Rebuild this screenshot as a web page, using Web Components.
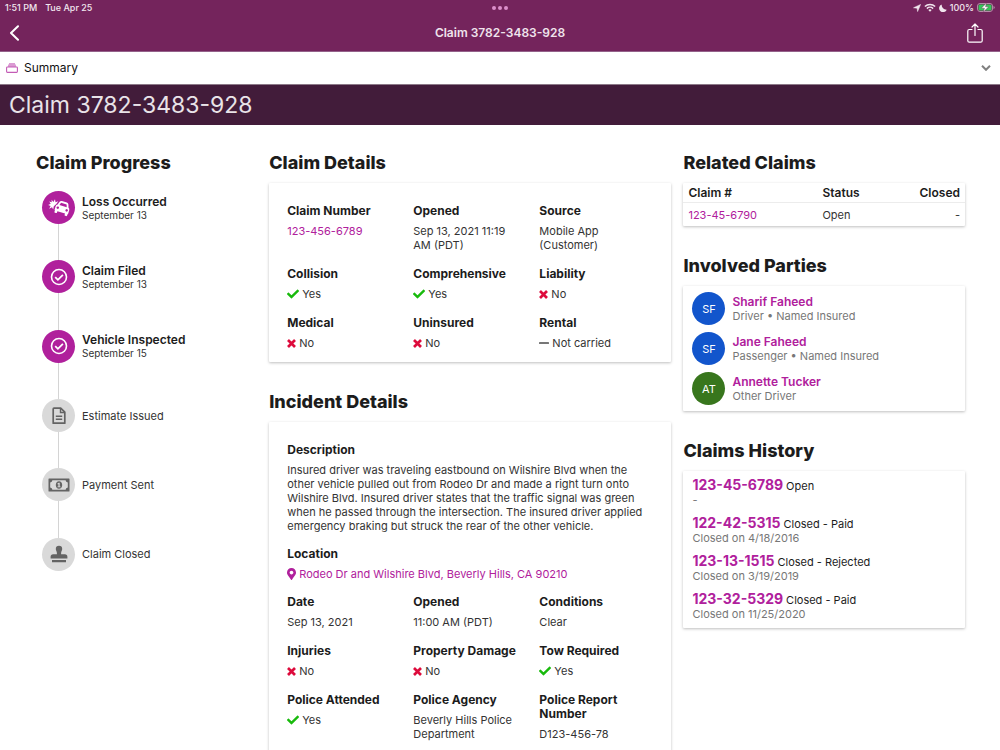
<!DOCTYPE html>
<html lang="en">
<head>
<meta charset="utf-8">
<meta name="viewport" content="width=device-width, initial-scale=1">
<title>Claim 3782-3483-928</title>
<style>
  body { margin: 0; background: #fff; color: #333; font: 11px/14px Inter, "Liberation Sans", sans-serif;
    --accent: #b0209c; --brand: #74245c; --band: #421c3a; --ink: #1c1c1c; }
</style>
</head>
<body>
<claim-app></claim-app>
<script>
const ICONS = {
  check: ['0 0 512 512', '<path fill="currentColor" d="M173.898 439.404l-166.4-166.4c-9.997-9.997-9.997-26.206 0-36.204l36.203-36.204c9.997-9.998 26.207-9.998 36.204 0L192 312.69 432.095 72.596c9.997-9.997 26.207-9.997 36.204 0l36.203 36.204c9.997 9.997 9.997 26.206 0 36.204l-294.4 294.401c-9.998 9.997-26.207 9.997-36.204-.001z"/>'],
  cross: ['0 0 9 9', '<path fill="none" stroke="currentColor" stroke-width="2.700" d="M1 1l7 7M8 1l-7 7"/>'],
  minus: ['0 0 10 10', '<rect y="4" width="10" height="2" rx=".5" fill="currentColor"/>'],
  pin: ['0 0 384 512', '<path fill="currentColor" d="M172.268 501.67C26.97 291.031 0 269.413 0 192 0 85.961 85.961 0 192 0s192 85.961 192 192c0 77.413-26.97 99.031-172.268 309.67-9.535 13.774-29.93 13.773-39.464 0zM192 272c44.183 0 80-35.817 80-80s-35.817-80-80-80-80 35.817-80 80 35.817 80 80 80z"/>'],
  back: ['0 0 10 16', '<path fill="none" stroke="currentColor" stroke-width="2" stroke-linecap="round" stroke-linejoin="round" d="M8.500 1.200L1.500 8l7 6.800"/>'],
  share: ['0 0 16 20', '<path fill="none" stroke="currentColor" stroke-width="1.200" stroke-linecap="round" stroke-linejoin="round" d="M5 6.500H2.300Q.8 6.500 .8 8V17.700Q.8 19.200 2.300 19.200H13.700Q15.200 19.200 15.200 17.700V8Q15.200 6.500 13.700 6.500H11M8 12.500V1M5 4l3-3 3 3"/>'],
  chevron: ['0 0 10 6', '<path fill="none" stroke="currentColor" stroke-width="2" d="M1 .8l4 4 4-4"/>'],
  stack: ['0 0 12 10', '<path fill="#db9bd3" d="M3 0h6v1.500H3zM2 1.500h8v2.500H2z"/><rect x=".6" y="4" width="10.800" height="5.400" rx=".8" fill="#fff" stroke="#c35bb5" stroke-width="1.100"/>'],
  okcircle: ['0 0 18 18', '<circle cx="9" cy="9" r="7.500" fill="none" stroke="currentColor" stroke-width="1.600"/><path fill="none" stroke="currentColor" stroke-width="1.800" d="M5.200 9.200l2.700 2.600 5-5"/>'],
  crash: ['0 0 22 18', '<path fill="currentColor" d="M3.600.8L5.400 2.900 7 .3 7.500 3.200 10.300 2.300 8.300 4.900 5.800 7.300 5.200 10.400 4 8.300 1.200 9.800 2.600 7 .2 6.100 2.700 4.700 1.200 2.400 3.700 3.200z"/><g transform="rotate(17 14 10)"><path fill="currentColor" fill-rule="evenodd" d="M9.600 3.800Q10.100 2.400 11.600 2.400H16.800Q18.300 2.400 18.800 3.800L19.900 7Q21.300 7.500 21.300 9.200V12.600Q21.300 13.200 20.800 13.300V14.800Q20.800 15.600 20 15.600H19Q18.200 15.600 18.200 14.800V13.400H10.200V14.800Q10.200 15.600 9.400 15.600H8.400Q7.600 15.600 7.600 14.800V13.300Q7.100 13.200 7.100 12.600V9.200Q7.100 7.500 8.500 7zM11.300 4.300L10.400 7H18L17.100 4.300zM9.500 8.700a1.250 1.250 0 1 0 .1 0zM18.800 8.700a1.250 1.250 0 1 0 .1 0z"/></g>'],
  doc: ['0 0 14 18', '<path fill="none" stroke="currentColor" stroke-width="1.700" stroke-linejoin="round" d="M2 1.200H8.700L12.800 5.200V16.200H1.200V2Q1.200 1.200 2 1.200z"/><path fill="none" stroke="currentColor" stroke-width="1.400" d="M8.500 1.500V5.500H12.500M3.800 9.300H10.200M3.800 12.200H10.200"/>'],
  cash: ['0 0 22 14', '<path fill="currentColor" fill-rule="evenodd" d="M1 .5H21Q21.500.5 21.500 1V13Q21.500 13.500 21 13.500H1Q.5 13.500.5 13V1Q.5.5 1 .5zM4.400 2.200Q4.200 4.200 2.200 4.400V9.600Q4.200 9.800 4.400 11.800H17.600Q17.800 9.800 19.800 9.600V4.400Q17.800 4.200 17.600 2.200z"/><path fill="currentColor" fill-rule="evenodd" d="M11 3.200c1.900 0 3.200 1.700 3.200 3.800S12.900 10.800 11 10.800 7.800 9.100 7.800 7 9.100 3.200 11 3.200zM10.700 4.800l-1.200.6v.8h.9v2.200H9.500v.9h3V8.400h-.8V4.800z"/>'],
  stamp: ['0 0 18 18', '<path fill="currentColor" d="M9 .8a3.200 3.200 0 0 1 3.200 3.200c0 1.700-1.100 2.300-1.100 4.200V9.200H14.800a2.600 2.600 0 0 1 2.600 2.600V13.600H.6V11.800A2.600 2.600 0 0 1 3.200 9.200H6.900V8.200C6.900 6.300 5.800 5.700 5.800 4A3.200 3.200 0 0 1 9 .8zM2 15H16V17.200H2z"/>'],
  locate: ['0 0 8 8', '<path fill="currentColor" stroke="currentColor" stroke-width=".5" stroke-linejoin="round" d="M7.600.4L4.600 7.600 4.100 4.200.5 3.800z"/>'],
  wifi: ['0 0 12 9', '<g fill="none" stroke="currentColor" stroke-width="1.500"><path d="M.9 3.500a7.200 7.200 0 0 1 10.200 0M2.900 5.600a4.400 4.400 0 0 1 6.200 0"/></g><path fill="currentColor" d="M6 8.700L4.300 7a2.400 2.400 0 0 1 3.400 0z"/>'],
  moon: ['0 0 8 8', '<path fill="currentColor" d="M2.700.4A4.800 4.800 0 0 0 7.800 5.700 4 4 0 1 1 2.700.4z"/>'],
  battery: ['0 0 18 9', '<rect x=".5" y=".5" width="15" height="8" rx="2.500" fill="none" stroke="#b58aa8"/><rect x="1.500" y="1.500" width="13" height="6" rx="1.500" fill="#34c759"/><path fill="#b58aa8" d="M16.500 3q1.200.3 1.200 1.500T16.500 6z"/><path fill="#fff" stroke="#74245c" stroke-width=".4" d="M9.500 0L4.300 5.200H7.500L6.300 9 11.700 3.800H8.500z"/>']
};

class UiIcon extends HTMLElement {
  connectedCallback() {
    const [box, art] = ICONS[this.getAttribute('name')];
    const root = this.shadowRoot || this.attachShadow({ mode: 'open' });
    root.innerHTML = `<style>:host{display:inline-block;flex:none}svg{display:block;width:100%;height:100%}</style><svg viewBox="${box}" aria-hidden="true">${art}</svg>`;
  }
}
customElements.define('ui-icon', UiIcon);

function define(name, render) {
  customElements.define(name, class extends HTMLElement {
    connectedCallback() {
      const root = this.shadowRoot || this.attachShadow({ mode: 'open' });
      root.innerHTML = render(this);
    }
  });
}

define('status-bar', () => `
<style>
  :host { display: grid; grid-template-columns: 1fr auto 1fr; align-items: center; height: 15px; padding: 0 5px; color: #f1e6ee; font-size: 9px; line-height: 12px; font-weight: 500; }
  .time { display: flex; gap: 8px; }
  .dots { display: flex; gap: 2px; }
  .dots i { width: 4px; height: 4px; border-radius: 50%; background: #dc8fcb; }
  .right { display: flex; gap: 3px; align-items: center; justify-content: flex-end; }
  .s { width: 8px; height: 8px; } .w { width: 12px; height: 9px; } .b { width: 18px; height: 9px; }
</style>
<div class="time"><span>1:51 PM</span><span>Tue Apr 25</span></div>
<div class="dots"><i></i><i></i><i></i></div>
<div class="right"><ui-icon class="s" name="locate"></ui-icon><ui-icon class="w" name="wifi"></ui-icon><ui-icon class="s" name="moon"></ui-icon><span>100%</span><ui-icon class="b" name="battery"></ui-icon></div>`);

define('nav-bar', () => `
<style>
  :host { display: grid; grid-template-columns: 1fr auto 1fr; align-items: center; height: 36px; padding: 0 8px; color: #efe3ec; border-bottom: 1px solid #94628a; }
  button { display: block; background: none; border: 0; padding: 0; color: #fff; }
  button:last-child { justify-self: end; padding-right: 9px; }
  h1 { margin: 0; font-size: 12px; line-height: 18px; font-weight: 600; }
  .back { width: 13px; height: 16px; display: block; } .share { width: 16px; height: 20px; display: block; }
</style>
<button aria-label="Back"><ui-icon class="back" name="back"></ui-icon></button>
<h1><slot></slot></h1>
<button aria-label="Share"><ui-icon class="share" name="share"></ui-icon></button>`);

define('view-picker', () => `
<style>
  :host { display: block; background: #fff; border-bottom: 1px solid #8c7988; }
  button { display: flex; align-items: center; gap: 6px; width: 100%; height: 32px; padding: 0 9px 0 6px; border: 0; background: none; font: inherit; font-size: 12px; color: #111; }
  .stack { width: 12px; height: 10px; } .chev { width: 10px; height: 6px; margin-left: auto; color: #808080; }
</style>
<button aria-expanded="false"><ui-icon class="stack" name="stack"></ui-icon><slot></slot><ui-icon class="chev" name="chevron"></ui-icon></button>`);

define('page-section', el => `
<style>
  :host { display: block; }
  h2 { margin: 0 0 8px; font-size: 18px; line-height: 24px; font-weight: 800; color: var(--ink); }
</style>
<section><h2>${el.getAttribute('heading')}</h2><slot></slot></section>`);

define('ui-card', () => `
<style>
  :host { display: block; background: #fff; border-radius: 1px; box-shadow: 0 1px 3px rgba(0,0,0,.26); box-sizing: border-box; padding: var(--pad, 0); }
</style><slot></slot>`);

define('progress-list', () => `
<style>
  :host { display: block; }
  div { display: grid; grid-auto-rows: 1fr; height: 416px; padding: 8px 0 0 6px; }
</style><div role="list"><slot></slot></div>`);

define('progress-step', el => {
  const date = el.getAttribute('date');
  return `
<style>
  :host { display: grid; grid-template-columns: 33px 1fr; grid-template-rows: 33px 1fr; column-gap: 7px; }
  .dot { display: grid; place-items: center; border-radius: 50%; background: ${date ? 'var(--accent)' : '#d9d9d9'}; color: ${date ? '#fff' : '#636363'}; }
  .text { align-self: center; }
  strong { display: block; color: var(--ink); font-size: 12px; font-weight: 600; }
  small { display: block; font-size: 10px; line-height: 12px; }
  .line { justify-self: center; width: 1px; background: #d4d4d4; }
  :host(:last-child) .line { display: none; }
  ui-icon { width: ${el.getAttribute('w') || 18}px; height: ${el.getAttribute('h') || 18}px; }
</style>
<div class="dot"><ui-icon name="${el.getAttribute('icon')}"></ui-icon></div>
<div class="text">${date ? `<strong><slot></slot></strong><small>${date}</small>` : '<slot></slot>'}</div>
<div class="line"></div>`;
});

define('field-grid', () => `
<style>
  :host { display: grid; grid-template-columns: repeat(3, minmax(0, 1fr)); gap: 15px 12px; }
  ::slotted(data-field) { padding-right: 4px; }
</style><slot></slot>`);

define('data-field', el => {
  const marks = { yes: ['check', '#18ba0c', 12, 12], no: ['cross', '#dd0b3c', 9, 9], none: ['minus', '#777', 10, 10], place: ['pin', 'var(--accent)', 9, 12] };
  const m = marks[el.getAttribute('mark')];
  return `
<style>
  :host { display: block; }
  .label { font-size: 12px; font-weight: 700; color: var(--ink); margin-bottom: 6px; }
  .value { display: flex; align-items: center; gap: 3px; }
  ${m ? `ui-icon { color: ${m[1]}; width: ${m[2]}px; height: ${m[3]}px; }` : ''}
  ::slotted(a) { color: var(--accent); text-decoration: none; }
</style>
<div class="label">${el.getAttribute('label')}</div>
<div class="value">${m ? `<ui-icon name="${m[0]}"></ui-icon>` : ''}<span><slot></slot></span></div>`;
});

define('related-table', () => `
<style>
  :host { display: block; }
  table { width: 100%; border-collapse: collapse; table-layout: fixed; }
  th, td { padding: 0 5px; text-align: left; }
  th { height: 19px; font-size: 12px; font-weight: 600; color: var(--ink); border-bottom: 1px solid #ececec; }
  td { height: 23px; }
  th:last-child, td:last-child { text-align: right; }
  th:first-child { width: 124px; }
  a { color: var(--accent); text-decoration: none; }
</style>
<table><thead><tr><th>Claim #</th><th>Status</th><th>Closed</th></tr></thead>
<tbody><tr><td><a href="#">123-45-6790</a></td><td>Open</td><td>-</td></tr></tbody></table>`);

define('party-row', el => `
<style>
  :host { display: flex; align-items: center; gap: 7px; color: #777; }
  .avatar { display: grid; place-items: center; width: 33px; height: 33px; border-radius: 50%; color: #fff; background: ${el.getAttribute('color')}; }
  a { display: block; color: var(--accent); font-size: 12px; font-weight: 600; text-decoration: none; }
</style>
<div class="avatar">${el.getAttribute('initials')}</div>
<div><a href="#">${el.getAttribute('name')}</a><slot></slot></div>`);

define('history-row', el => `
<style>
  :host { display: block; color: var(--ink); line-height: 16px; }
  .top { display: flex; align-items: baseline; gap: 3px; height: 16px; }
  a { color: var(--accent); font-size: 14px; font-weight: 700; text-decoration: none; }
  .note { color: #777; line-height: 14px; }
</style>
<div class="top"><a href="#">${el.getAttribute('number')}</a><span>${el.getAttribute('state')}</span></div>
<div class="note"><slot></slot></div>`);

define('claim-app', () => `
<style>
  :host { display: flex; flex-direction: column; height: 100vh; }
  header { background: var(--brand); }
  .band { background: var(--band); color: #e9e3e8; font-size: 23px; line-height: 40px; padding: 0 9px; }
  main { flex: 1; min-height: 0; overflow-y: auto; scrollbar-width: none; display: grid; grid-template-columns: 11fr 20fr 14fr; gap: 12px; padding: 26px 35px 26px 36px; align-items: start; }
  .col, .stack { display: grid; }
  .col { gap: 28px; min-width: 0; }
  .stack { gap: 14px; }
  .details { --pad: 21px 18px 12px; }
  .parties { --pad: 6px 9px; }
  .parties .stack { gap: 7px; }
  .history { --pad: 6px 9px 7px; }
  .history .stack { gap: 8px; }
</style>
<header><status-bar></status-bar><nav-bar>Claim 3782-3483-928</nav-bar></header>
<view-picker>Summary</view-picker>
<div class="band">Claim 3782-3483-928</div>
<main>
  <div class="col"><page-section heading="Claim Progress"><progress-list>
    <progress-step role="listitem" icon="crash" w="22" date="September 13">Loss Occurred</progress-step>
    <progress-step role="listitem" icon="okcircle" date="September 13">Claim Filed</progress-step>
    <progress-step role="listitem" icon="okcircle" date="September 15">Vehicle Inspected</progress-step>
    <progress-step role="listitem" icon="doc" w="14">Estimate Issued</progress-step>
    <progress-step role="listitem" icon="cash" w="22" h="14">Payment Sent</progress-step>
    <progress-step role="listitem" icon="stamp">Claim Closed</progress-step>
  </progress-list></page-section></div>
  <div class="col">
    <page-section heading="Claim Details"><ui-card class="details"><field-grid>
      <data-field label="Claim Number"><a href="#">123-456-6789</a></data-field>
      <data-field label="Opened">Sep 13, 2021 11:19 AM (PDT)</data-field>
      <data-field label="Source">Mobile App (Customer)</data-field>
      <data-field label="Collision" mark="yes">Yes</data-field>
      <data-field label="Comprehensive" mark="yes">Yes</data-field>
      <data-field label="Liability" mark="no">No</data-field>
      <data-field label="Medical" mark="no">No</data-field>
      <data-field label="Uninsured" mark="no">No</data-field>
      <data-field label="Rental" mark="none">Not carried</data-field>
    </field-grid></ui-card></page-section>
    <page-section heading="Incident Details"><ui-card class="details"><div class="stack">
      <data-field label="Description">Insured driver was traveling eastbound on Wilshire Blvd when the other vehicle pulled out from Rodeo Dr and made a right turn onto Wilshire Blvd. Insured driver states that the traffic signal was green when he passed through the intersection. The insured driver applied emergency braking but struck the rear of the other vehicle.</data-field>
      <data-field label="Location" mark="place"><a href="#">Rodeo Dr and Wilshire Blvd, Beverly Hills, CA 90210</a></data-field>
      <field-grid>
        <data-field label="Date">Sep 13, 2021</data-field>
        <data-field label="Opened">11:00 AM (PDT)</data-field>
        <data-field label="Conditions">Clear</data-field>
        <data-field label="Injuries" mark="no">No</data-field>
        <data-field label="Property Damage" mark="no">No</data-field>
        <data-field label="Tow Required" mark="yes">Yes</data-field>
        <data-field label="Police Attended" mark="yes">Yes</data-field>
        <data-field label="Police Agency">Beverly Hills Police Department</data-field>
        <data-field label="Police Report Number">D123-456-78</data-field>
      </field-grid>
    </div></ui-card></page-section>
  </div>
  <div class="col">
    <page-section heading="Related Claims"><ui-card><related-table></related-table></ui-card></page-section>
    <page-section heading="Involved Parties"><ui-card class="parties"><div class="stack">
      <party-row initials="SF" color="#1255cc" name="Sharif Faheed">Driver • Named Insured</party-row>
      <party-row initials="SF" color="#1255cc" name="Jane Faheed">Passenger • Named Insured</party-row>
      <party-row initials="AT" color="#38761d" name="Annette Tucker">Other Driver</party-row>
    </div></ui-card></page-section>
    <page-section heading="Claims History"><ui-card class="history"><div class="stack">
      <history-row number="123-45-6789" state="Open">-</history-row>
      <history-row number="122-42-5315" state="Closed - Paid">Closed on 4/18/2016</history-row>
      <history-row number="123-13-1515" state="Closed - Rejected">Closed on 3/19/2019</history-row>
      <history-row number="123-32-5329" state="Closed - Paid">Closed on 11/25/2020</history-row>
    </div></ui-card></page-section>
  </div>
</main>`);
</script>
</body>
</html>
